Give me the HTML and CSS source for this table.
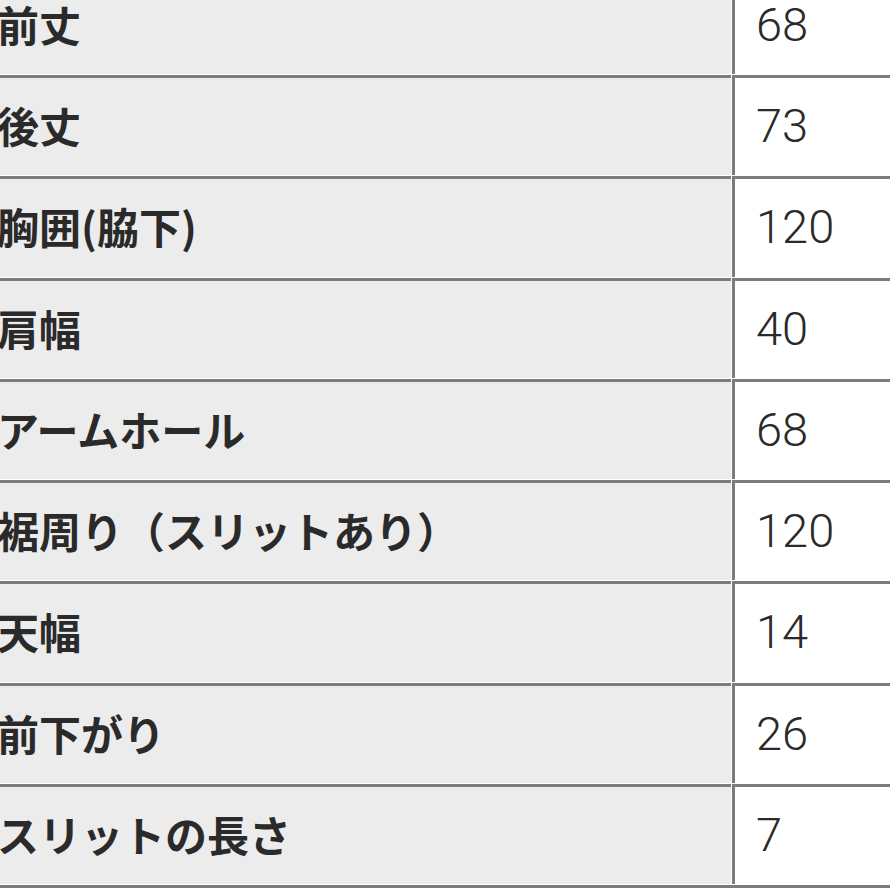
FILE: index.html
```html
<!DOCTYPE html>
<html lang="ja">
<head>
<meta charset="utf-8">
<title>サイズ表</title>
<link rel="stylesheet" href="styles.css">
</head>
<body>
<div class="sheet">
  <div class="label">前丈</div><div class="value">68</div>
  <div class="label">後丈</div><div class="value">73</div>
  <div class="label">胸囲(脇下)</div><div class="value">120</div>
  <div class="label">肩幅</div><div class="value">40</div>
  <div class="label">アームホール</div><div class="value">68</div>
  <div class="label">裾周り（スリットあり）</div><div class="value">120</div>
  <div class="label">天幅</div><div class="value">14</div>
  <div class="label">前下がり</div><div class="value">26</div>
  <div class="label">スリットの長さ</div><div class="value">7</div>
</div>
</body>
</html>
```
FILE: styles.css
```css
html, body {
  margin: 0;
  padding: 0;
  background: #ffffff;
  overflow: hidden;
}

.sheet {
  display: grid;
  grid-template-columns: 734px 1fr;
  grid-auto-rows: 100.25px;
  gap: 1px;
  margin: -26.25px 0 0 -3px;
  padding-bottom: 1px;
  border-bottom: 3px solid #7c7c7c;
  background: #ffffff;
  color: #2a2a2a;
  font-family: "Noto Sans CJK JP", "Noto Sans", sans-serif;
}

.label,
.value {
  display: flex;
  align-items: center;
  border-top: 3px solid #7c7c7c;
  box-sizing: border-box;
}

.label {
  background: #ececec;
  font-size: 42px;
  font-weight: 700;
  padding: 0 0 4px 0;
  white-space: nowrap;
}

.value {
  background: #ffffff;
  border-left: 3px solid #7c7c7c;
  font-family: Roboto, "Liberation Sans", sans-serif;
  font-size: 47px;
  font-weight: 300;
  padding: 0 0 2px 21px;
}
```
